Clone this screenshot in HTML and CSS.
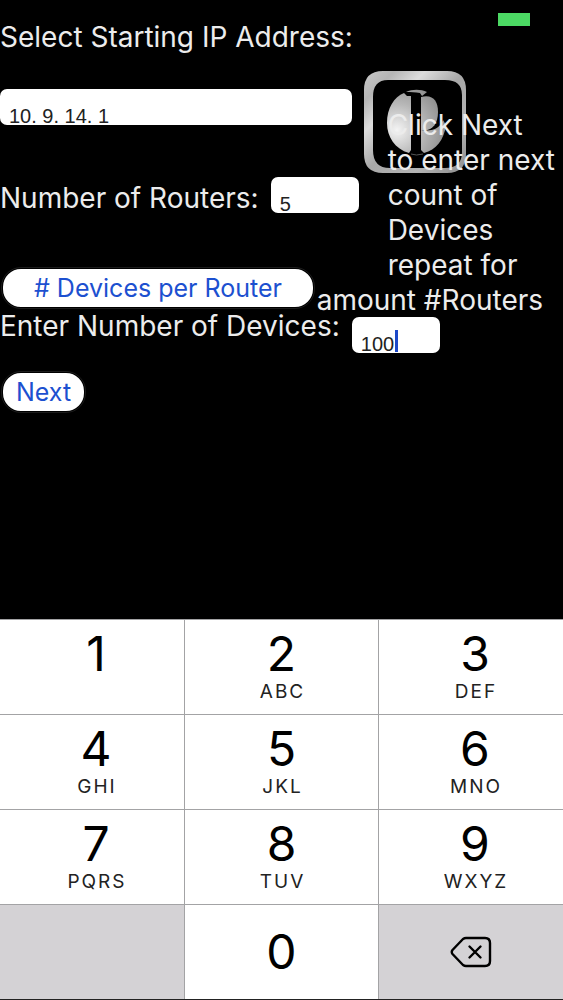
FILE: index.html
```
<!DOCTYPE html>
<html lang="en">
<head>
  <meta charset="UTF-8">
  <meta name="viewport" content="width=device-width, initial-scale=1">
  <title>Router Setup</title>
  <link rel="stylesheet" href="styles.css">
</head>
<body>

  <main>
    <div class="battery"></div>

    <div class="top">
      <div class="fields">
        <label class="title" for="ip">Select Starting IP Address:</label>
        <input class="ip" type="text" id="ip" value="10. 9. 14. 1">
        <div class="row">
          <label for="routers">Number of Routers:</label>
          <input type="text" id="routers" value="5">
        </div>
        <button class="pill wide">#&nbsp;Devices per Router</button>
      </div>

      <div class="note">
        <svg class="logo" viewBox="0 0 104 104" aria-hidden="true">
          <defs>
            <linearGradient id="frame" x1="0" y1="0" x2="1" y2="1">
              <stop offset="0" stop-color="#c9c9c9"/>
              <stop offset="0.15" stop-color="#b5b5b5"/>
              <stop offset="0.3" stop-color="#dcdcdc"/>
              <stop offset="0.5" stop-color="#a8a8a8"/>
              <stop offset="0.75" stop-color="#b4b4b4"/>
              <stop offset="1" stop-color="#8c8c8c"/>
            </linearGradient>
            <radialGradient id="disc" gradientUnits="userSpaceOnUse" cx="34" cy="60" r="52">
              <stop offset="0" stop-color="#f4f4f4"/>
              <stop offset="0.5" stop-color="#b8b8b8"/>
              <stop offset="1" stop-color="#8a8a8a"/>
            </radialGradient>
          </defs>
          <path fill="url(#frame)" fill-rule="evenodd" d="M20 1H84Q103 1 103 20V84Q103 103 84 103H20Q1 103 1 84V20Q1 1 20 1ZM25 10Q10 10 10 27V80Q10 98 27 98H82Q99 98 99 82V25Q99 10 82 10Z"/>
          <g fill="url(#disc)">
            <path d="M41 23 44 26H48V80L46 83C32 79 24 67 24 53C24 38 31 27 41 23Z"/>
            <path d="M58 27C70 24 75 31 75 42C75 54 69 62 58 60Z"/>
            <path d="M58 60C70 62 77 58 80 50L83 55C81 70 73 80 61 83L58 80Z"/>
            <path d="M43 22C49 19 58 19 64 22L59 26L57 23C52 22 48 22 43 22Z"/>
          </g>
          <path d="M48 84Q53 86 60 84" fill="none" stroke="#555"/>
        </svg>
        <p>Click Next<br>to enter next<br>count of<br>Devices<br>repeat for</p>
        <p class="last">amount #Routers</p>
      </div>
    </div>

    <div class="row">
      <label for="devices">Enter Number of Devices:</label>
      <span class="active">
        <input type="text" id="devices" value="100">
        <span class="caret"></span>
      </span>
    </div>
    <button class="pill">Next</button>
  </main>

  <div class="keypad">
    <button>1<small></small></button>
    <button>2<small>ABC</small></button>
    <button>3<small>DEF</small></button>
    <button>4<small>GHI</small></button>
    <button>5<small>JKL</small></button>
    <button>6<small>MNO</small></button>
    <button>7<small>PQRS</small></button>
    <button>8<small>TUV</small></button>
    <button>9<small>WXYZ</small></button>
    <div class="blank"></div>
    <button>0</button>
    <button class="delete" aria-label="Delete">
      <svg width="42" height="32" viewBox="0 0 42 32" fill="none" stroke="#000" stroke-width="2.4" stroke-linecap="round" stroke-linejoin="round">
        <path d="M13 3Q14.500 2 16 2H35Q40 2 40 7V25Q40 30 35 30H16Q14.500 30 13 29L2.500 18Q1 16 2.500 14Z"/>
        <path d="M19.500 10.500 30.500 21.500M30.500 10.500 19.500 21.500"/>
      </svg>
    </button>
  </div>

  <script>
    const field = document.getElementById("devices");
    const caret = document.querySelector(".caret");

    document.querySelectorAll(".keypad button").forEach(key => {
      key.onclick = () => {
        if (key.className === "delete") {
          field.value = field.value.slice(0, -1);
        } else {
          field.value += key.firstChild.textContent.trim();
        }
        caret.style.left = 10 + field.value.length * 11 + "px";
      };
    });
  </script>

</body>
</html>
```

FILE: styles.css
```
* {
  box-sizing: border-box;
}

body {
  margin: 0;
  min-height: 100vh;
  display: flex;
  flex-direction: column;
  background: #000;
  color: #ececec;
  font-family: Inter, "Liberation Sans", sans-serif;
  font-size: 28px;
  line-height: 35px;
}

main {
  position: relative;
  flex: 1;
  padding-top: 20px;
}

p {
  margin: 0;
}

input {
  display: block;
  width: 88px;
  height: 36px;
  padding: 18px 8px 0 9px;
  border: none;
  border-radius: 7px;
  background: #fff;
  color: #222;
  font-family: "Liberation Sans", Arial, sans-serif;
  font-size: 20px;
  line-height: 18px;
  outline: none;
}

button {
  font-family: inherit;
  cursor: pointer;
}

.battery {
  position: absolute;
  top: 13px;
  right: 33px;
  width: 32px;
  height: 13px;
  background: #4cd964;
}

.top {
  display: flex;
  align-items: flex-end;
  gap: 29px;
}

.fields {
  display: flex;
  flex-direction: column;
  align-items: flex-start;
}

.title {
  margin-bottom: 34px;
}

.ip {
  width: 352px;
  margin-bottom: 52px;
}

.row {
  display: flex;
  gap: 12px;
}

.row label {
  white-space: nowrap;
}

.fields .row {
  margin-bottom: 54px;
}

.fields .row label {
  padding-top: 4px;
  margin-bottom: -4px;
}

.pill {
  display: block;
  height: 42px;
  margin-left: 1px;
  padding: 0 13px;
  border: 2px solid #000;
  border-radius: 20px;
  outline: 1px solid #1c1c1c;
  outline-offset: -1px;
  background: #fff;
  color: #1c50d0;
  font-size: 25px;
  line-height: 36px;
}

.wide {
  padding: 0 31px;
}

.note {
  position: relative;
  flex: 1;
  white-space: nowrap;
  margin-bottom: -9px;
}

.note p {
  position: relative;
}

.note .last {
  margin-left: -71px;
}

.logo {
  position: absolute;
  top: -38px;
  left: -25px;
  width: 104px;
  height: 104px;
}

main > .row {
  margin-bottom: 18px;
}

.active {
  position: relative;
  margin-top: 8px;
}

.caret {
  position: absolute;
  top: 13px;
  left: 43px;
  width: 3px;
  height: 22px;
  background: #1d49c8;
}

.keypad {
  display: grid;
  grid-template-columns: 184fr 193fr 184fr;
  grid-auto-rows: 94px;
  gap: 1px;
  background: #a3a3a5;
  border-top: 1px solid #a3a3a5;
  border-bottom: 1px solid #222;
}

.keypad button {
  display: flex;
  flex-direction: column;
  align-items: center;
  justify-content: center;
  border: none;
  padding: 0;
  background: #fff;
  color: #000;
  font-size: 48px;
  line-height: 48px;
}

.keypad button:nth-child(3n+1),
.keypad button:nth-child(3n) {
  padding-left: 8px;
}

.keypad small {
  height: 26px;
  padding-left: 2px;
  color: #222;
  font-size: 19px;
  line-height: 28px;
  letter-spacing: 2px;
}

.keypad .blank,
.keypad .delete {
  background: #d4d2d5;
}

.keypad .delete:last-child {
  padding-left: 0;
}
```
